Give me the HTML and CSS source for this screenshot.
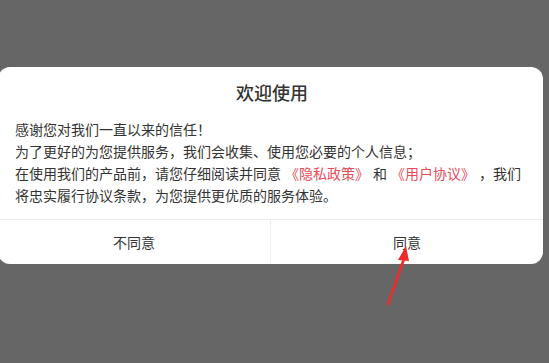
FILE: index.html
```html
<!DOCTYPE html>
<html lang="zh-CN">
  <head>
    <meta charset="UTF-8" />
    <meta name="viewport" content="width=device-width, initial-scale=1.0" />
    <title>欢迎使用</title>
    <link rel="stylesheet" href="styles.css">
  </head>
  <body>
    <div class="mask">
      <div class="dialog">
        <h2 class="dialog-title">欢迎使用</h2>
        <div class="dialog-body">
          <p>感谢您对我们一直以来的信任！</p>
          <p>为了更好的为您提供服务，我们会收集、使用您必要的个人信息；</p>
          <p>在使用我们的产品前，请您仔细阅读并同意<span class="link">《隐私政策》</span>和<span class="link">《用户协议》</span>，我们将忠实履行协议条款，为您提供更优质的服务体验。</p>
        </div>
        <div class="dialog-footer">
          <div class="btn">不同意</div>
          <div class="btn">同意</div>
        </div>
      </div>
      <svg class="arrow" width="40" height="70" viewBox="0 0 40 70">
        <path d="M10 64 L27 16" stroke="#f02a2a" stroke-width="2.6" stroke-linecap="round" fill="none" />
        <path d="M28 6 L20 20 L31 21 Z" fill="#f02a2a" />
      </svg>
    </div>
  </body>
</html>
```

FILE: styles.css
```css
html,
body {
  margin: 0;
  padding: 0;
  height: 100%;
}
body {
  font-family: "Noto Sans CJK SC", "Noto Sans", sans-serif;
  background-color: #666666;
  color: #333;
}
.mask {
  position: relative;
  height: 100%;
  padding-top: 67px;
  box-sizing: border-box;
}
.dialog {
  margin-left: -2px;
  width: 545px;
  background-color: #fff;
  border-radius: 12px;
  overflow: hidden;
}
.dialog-title {
  margin: 0;
  padding-top: 12px;
  padding-left: 3px;
  height: 27px;
  line-height: 27px;
  font-size: 18px;
  font-weight: 500;
  text-align: center;
  color: #333;
}
.dialog-body {
  padding: 12px 20px 13px 17px;
  font-size: 14px;
  line-height: 22px;
  text-spacing-trim: space-all;
}
.dialog-body p {
  margin: 0;
}
.link {
  color: #ea4a5a;
  margin: 0 4px;
}
.dialog-footer {
  display: flex;
  border-top: 1px solid #eeeeee;
}
.btn {
  flex: 1;
  height: 44px;
  line-height: 44px;
  text-align: center;
  font-size: 14px;
  color: #333;
}
.btn + .btn {
  border-left: 1px solid #eeeeee;
}
.arrow {
  position: absolute;
  left: 378px;
  top: 240px;
}
```
